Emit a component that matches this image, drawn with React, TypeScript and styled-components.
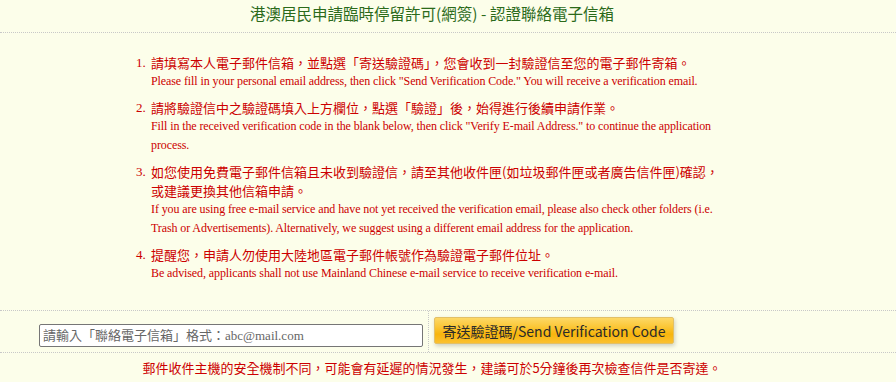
import React from 'react';
import styled, { createGlobalStyle } from 'styled-components';

const GlobalStyle = createGlobalStyle`
  html, body {
    margin: 0;
    padding: 0;
    background: #fcfeea;
  }
  body {
    font-family: 'Liberation Serif', 'Noto Sans CJK TC', serif;
  }
`;

const Page = styled.div`
  width: 896px;
  min-height: 382px;
  background: #fcfeea;
`;

const Header = styled.div`
  height: 32px;
  border-bottom: 1px dotted #c8c8c8;
  display: flex;
  align-items: center;
  justify-content: center;
  padding-right: 32px;
`;

const Title = styled.h1`
  margin: 0;
  font-family: 'Noto Sans CJK TC', sans-serif;
  font-size: 15.5px;
  font-weight: normal;
  color: #2b6a1a;
  line-height: 20px;
  transform: translateY(-3px);
`;

const NoticeList = styled.ol`
  margin: 0;
  padding: 20px 0 27px 151px;
  list-style: none;
  color: #cc0000;
  counter-reset: notice;
`;

const NoticeItem = styled.li`
  position: relative;
  margin-bottom: 7px;
  counter-increment: notice;
  &:last-child {
    margin-bottom: 0;
  }
  &::before {
    content: counter(notice) '.';
    position: absolute;
    left: -15px;
    top: 0;
    font-family: 'Liberation Serif', serif;
    font-size: 13px;
    line-height: 19px;
  }
`;

const ZhLine = styled.div`
  font-family: 'Noto Sans CJK TC', sans-serif;
  font-size: 13px;
  line-height: 19px;
  max-width: 580px;
`;

const EnLine = styled.div`
  font-family: 'Liberation Serif', serif;
  font-size: 12px;
  line-height: 19px;
  max-width: 580px;
  letter-spacing: -0.1px;
  &:first-of-type {
    margin-top: 1px;
  }
`;

const FormRow = styled.div`
  display: grid;
  grid-template-columns: 429px 1fr;
  height: 41px;
  border-top: 1px dotted #c8c8c8;
  border-bottom: 1px dotted #c8c8c8;
`;

const InputCell = styled.div`
  display: flex;
  justify-content: flex-end;
  align-items: flex-start;
  padding: 13px 5px 0 0;
  border-right: 1px dotted #c8c8c8;
`;

const ButtonCell = styled.div`
  display: flex;
  align-items: flex-start;
  padding: 6px 0 0 5px;
`;

const EmailInput = styled.input`
  width: 384px;
  height: 23px;
  box-sizing: border-box;
  border: 1px solid #767676;
  border-radius: 2px;
  background: #fff;
  padding: 0 3px;
  font-family: 'Liberation Serif', 'Noto Sans CJK TC', serif;
  font-size: 13px;
  outline: none;
  &::placeholder {
    color: #666;
  }
`;

const SendButton = styled.button`
  width: 240px;
  height: 27px;
  border: 1px solid #e2c067;
  border-radius: 2px;
  background: linear-gradient(
    to bottom,
    #fdd866 0%,
    #fbc737 35%,
    #f7b50d 65%,
    #fbc130 100%
  );
  box-shadow: 1px 2px 4px rgba(0, 0, 0, 0.18);
  color: #2a2a2a;
  font-family: 'Noto Sans CJK TC', sans-serif;
  font-size: 14px;
  padding: 0 4px;
  white-space: nowrap;
  cursor: pointer;
`;

const Note = styled.p`
  margin: 0;
  padding: 5px 32px 0 0;
  text-align: center;
  color: #cc0000;
  font-family: 'Noto Sans CJK TC', sans-serif;
  font-size: 13px;
  line-height: 20px;
`;

type Notice = { zh: string[]; en: string[] };

const notices: Notice[] = [
  {
    zh: ['請填寫本人電子郵件信箱，並點選「寄送驗證碼」，您會收到一封驗證信至您的電子郵件寄箱。'],
    en: ['Please fill in your personal email address, then click "Send Verification Code." You will receive a verification email.'],
  },
  {
    zh: ['請將驗證信中之驗證碼填入上方欄位，點選「驗證」後，始得進行後續申請作業。'],
    en: [
      'Fill in the received verification code in the blank below, then click "Verify E-mail Address." to continue the application',
      'process.',
    ],
  },
  {
    zh: [
      '如您使用免費電子郵件信箱且未收到驗證信，請至其他收件匣(如垃圾郵件匣或者廣告信件匣)確認，',
      '或建議更換其他信箱申請。',
    ],
    en: [
      'If you are using free e-mail service and have not yet received the verification email, please also check other folders (i.e.',
      'Trash or Advertisements). Alternatively, we suggest using a different email address for the application.',
    ],
  },
  {
    zh: ['提醒您，申請人勿使用大陸地區電子郵件帳號作為驗證電子郵件位址。'],
    en: ['Be advised, applicants shall not use Mainland Chinese e-mail service to receive verification e-mail.'],
  },
];

export default function App() {
  return (
    <Page>
      <GlobalStyle />
      <Header>
        <Title>港澳居民申請臨時停留許可(網簽) - 認證聯絡電子信箱</Title>
      </Header>
      <NoticeList>
        {notices.map((n, i) => (
          <NoticeItem key={i}>
            {n.zh.map((t, j) => (
              <ZhLine key={'zh' + j}>{t}</ZhLine>
            ))}
            {n.en.map((t, j) => (
              <EnLine key={'en' + j}>{t}</EnLine>
            ))}
          </NoticeItem>
        ))}
      </NoticeList>
      <FormRow>
        <InputCell>
          <EmailInput type="text" placeholder="請輸入「聯絡電子信箱」格式：abc@mail.com" />
        </InputCell>
        <ButtonCell>
          <SendButton type="button">寄送驗證碼/Send Verification Code</SendButton>
        </ButtonCell>
      </FormRow>
      <Note>郵件收件主機的安全機制不同，可能會有延遲的情況發生，建議可於5分鐘後再次檢查信件是否寄達。</Note>
    </Page>
  );
}
